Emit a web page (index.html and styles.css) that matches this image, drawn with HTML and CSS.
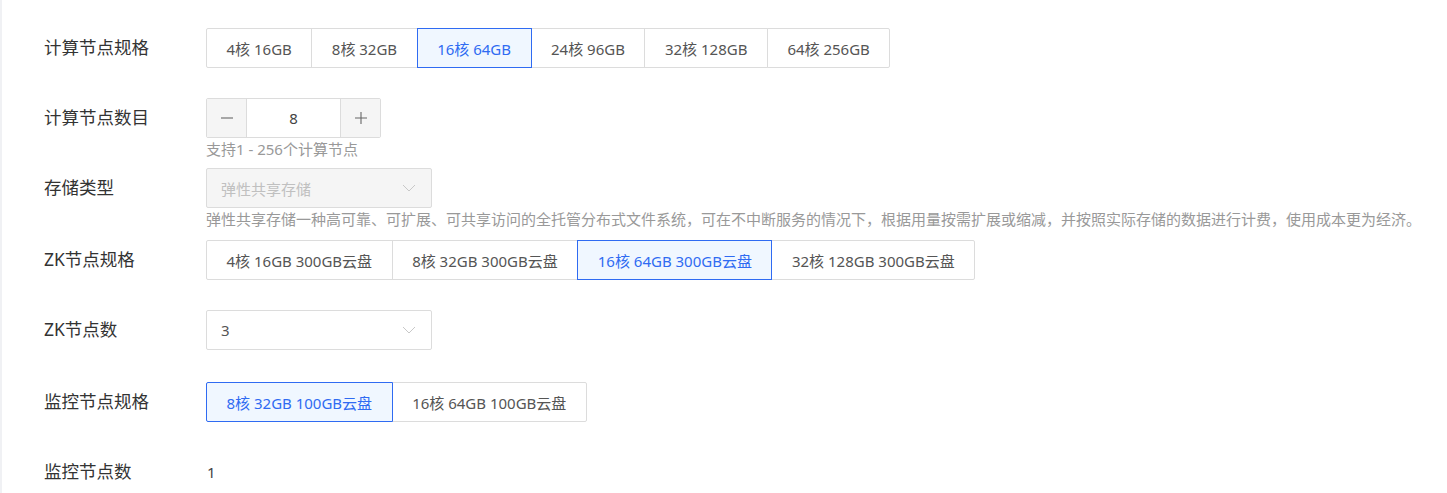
FILE: index.html
```html
<!DOCTYPE html>
<html lang="zh-CN">
<head>
<meta charset="utf-8">
<title>配置</title>
<link rel="stylesheet" href="styles.css">
</head>
<body>
<div class="page">
  <form class="form">
    <div class="item r70">
      <div class="label">计算节点规格</div>
      <div class="control">
        <div class="group">
          <button type="button" class="opt">4核 16GB</button>
          <button type="button" class="opt">8核 32GB</button>
          <button type="button" class="opt on">16核 64GB</button>
          <button type="button" class="opt">24核 96GB</button>
          <button type="button" class="opt">32核 128GB</button>
          <button type="button" class="opt">64核 256GB</button>
        </div>
      </div>
    </div>
    <div class="item r70">
      <div class="label">计算节点数目</div>
      <div class="control">
        <div class="num">
          <span class="nbtn"><svg width="14" height="14" viewBox="0 0 14 14"><path d="M1 7h12" stroke="#666" stroke-width="1.1"/></svg></span>
          <span class="nval">8</span>
          <span class="nbtn"><svg width="14" height="14" viewBox="0 0 14 14"><path d="M1 7h12M7 1v12" stroke="#666" stroke-width="1.1"/></svg></span>
        </div>
        <div class="help">支持1 - 256个计算节点</div>
      </div>
    </div>
    <div class="item r72">
      <div class="label">存储类型</div>
      <div class="control">
        <div class="select disabled">
          <span class="sval">弹性共享存储</span>
          <svg class="chev" width="14" height="8" viewBox="0 0 14 8"><path d="M1 1l6 6 6-6" fill="none" stroke="#c8c8c8" stroke-width="1"/></svg>
        </div>
        <div class="help">弹性共享存储一种高可靠、可扩展、可共享访问的全托管分布式文件系统，可在不中断服务的情况下，根据用量按需扩展或缩减，并按照实际存储的数据进行计费，使用成本更为经济。</div>
      </div>
    </div>
    <div class="item r70">
      <div class="label">ZK节点规格</div>
      <div class="control">
        <div class="group">
          <button type="button" class="opt">4核 16GB 300GB云盘</button>
          <button type="button" class="opt">8核 32GB 300GB云盘</button>
          <button type="button" class="opt on">16核 64GB 300GB云盘</button>
          <button type="button" class="opt">32核 128GB 300GB云盘</button>
        </div>
      </div>
    </div>
    <div class="item r72">
      <div class="label">ZK节点数</div>
      <div class="control">
        <div class="select">
          <span class="sval">3</span>
          <svg class="chev" width="14" height="8" viewBox="0 0 14 8"><path d="M1 1l6 6 6-6" fill="none" stroke="#c8c8c8" stroke-width="1"/></svg>
        </div>
      </div>
    </div>
    <div class="item r70">
      <div class="label">监控节点规格</div>
      <div class="control">
        <div class="group">
          <button type="button" class="opt on">8核 32GB 100GB云盘</button>
          <button type="button" class="opt">16核 64GB 100GB云盘</button>
        </div>
      </div>
    </div>
    <div class="item r62">
      <div class="label">监控节点数</div>
      <div class="control">
        <div class="plain">1</div>
      </div>
    </div>
  </form>
</div>
</body>
</html>
```

FILE: styles.css
```css
html, body {
  margin: 0;
  padding: 0;
  background: #fff;
}
body {
  font-family: "Noto Sans", "Noto Sans CJK SC", sans-serif;
  color: #333;
}
.page {
  border-left: 2px solid #f0f1f4;
  height: 493px;
  overflow: hidden;
  box-sizing: border-box;
  padding: 28px 0 0 42px;
}
.form {
  display: flex;
  flex-direction: column;
}
.item {
  display: flex;
  align-items: flex-start;
}
.r70 { height: 70px; }
.r72 { height: 72px; }
.r62 { height: 40px; }
.label {
  width: 162px;
  flex: none;
  height: 40px;
  line-height: 39px;
  font-size: 17.5px;
  color: #333;
}
.control {
  display: flex;
  flex-direction: column;
  align-items: flex-start;
}
.group {
  display: flex;
}
.opt {
  height: 40px;
  box-sizing: border-box;
  border: 1px solid #dcdcdc;
  background: #fff;
  color: #555;
  font-family: inherit;
  font-size: 15px;
  padding: 0 19.5px;
  margin: 0 0 0 -1px;
  cursor: pointer;
  position: relative;
}
.opt:first-child {
  margin-left: 0;
  border-radius: 2px 0 0 2px;
}
.opt:last-child {
  border-radius: 0 2px 2px 0;
}
.opt.on {
  border-color: #2f6bf2;
  background: #f0f7ff;
  color: #2f6bf2;
  z-index: 1;
}
.num {
  display: flex;
  height: 40px;
  box-sizing: border-box;
  border: 1px solid #dcdcdc;
  border-radius: 2px;
}
.nbtn {
  width: 39px;
  background: #f5f5f5;
  display: flex;
  align-items: center;
  justify-content: center;
}
.nbtn:first-child { border-right: 1px solid #dcdcdc; }
.nbtn:last-child { border-left: 1px solid #dcdcdc; }
.nval {
  width: 93px;
  text-align: center;
  line-height: 38px;
  font-size: 15px;
  color: #444;
}
.help {
  font-size: 15px;
  line-height: 22px;
  color: #999;
  white-space: nowrap;
}
.select {
  width: 226px;
  height: 40px;
  box-sizing: border-box;
  border: 1px solid #dcdcdc;
  border-radius: 2px;
  display: flex;
  align-items: center;
  justify-content: space-between;
  padding: 0 15px 0 14px;
  font-size: 15px;
  color: #555;
  background: #fff;
}
.select.disabled {
  background: #f5f5f5;
  color: #c0c0c0;
}
.chev { flex: none; }
.plain {
  height: 40px;
  line-height: 40px;
  font-size: 15px;
  color: #444;
  padding-left: 1px;
}
```
